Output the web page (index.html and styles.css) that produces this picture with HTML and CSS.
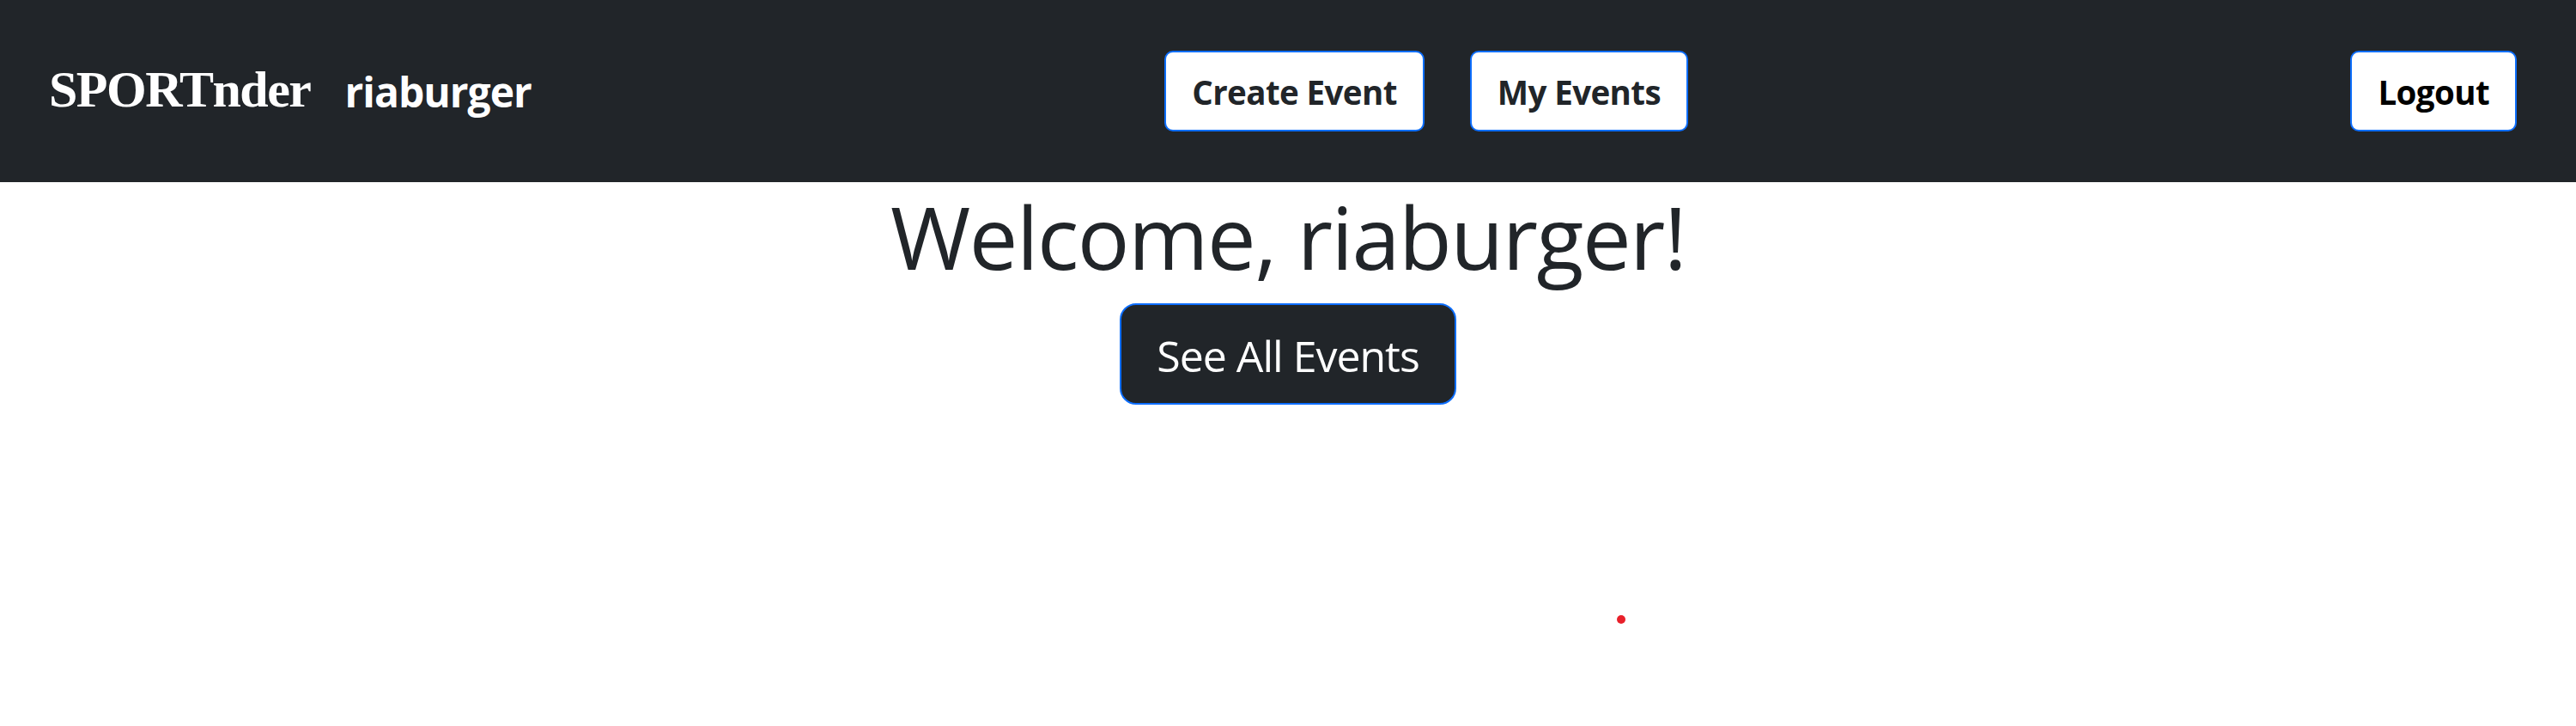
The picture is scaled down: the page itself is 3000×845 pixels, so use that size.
FILE: index.html
```html
<!DOCTYPE html>
<html lang="en">
<head>
<meta charset="utf-8">
<title>SPORTnder</title>
<link rel="stylesheet" href="styles.css">
</head>
<body>
<nav class="navbar">
  <div class="nav-left">
    <span class="brand">SPORTnder</span>
    <span class="username">riaburger</span>
  </div>
  <div class="nav-center">
    <button class="btn btn-light">Create Event</button>
    <button class="btn btn-light">My Events</button>
  </div>
  <div class="nav-right">
    <button class="btn btn-light btn-logout">Logout</button>
  </div>
</nav>
<main class="welcome">
  <h1 class="title">Welcome, riaburger!</h1>
  <button class="btn-lg">See All Events</button>
</main>
<span class="dot"></span>
</body>
</html>
```
FILE: styles.css
```css
html, body {
  margin: 0;
  padding: 0;
  background: #ffffff;
}
body {
  font-family: "Open Sans", "Noto Sans", sans-serif;
  color: #212529;
  position: relative;
  min-height: 845px;
}
.navbar {
  height: 212px;
  background: #212529;
  display: flex;
  align-items: center;
  padding: 0 69px 0 57px;
  box-sizing: border-box;
}
.nav-left {
  display: flex;
  align-items: center;
  gap: 40px;
}
.brand {
  font-family: "Liberation Serif", "Times New Roman", serif;
  font-weight: bold;
  font-size: 60px;
  color: #ffffff;
  letter-spacing: -1.5px;
  position: relative;
  top: -2px;
}
.username {
  font-weight: 700;
  font-size: 48px;
  color: #ffffff;
  letter-spacing: -1px;
}
.nav-center {
  flex: 1;
  display: flex;
  justify-content: center;
  gap: 53px;
  padding-right: 34px;
}
.nav-right {
  display: flex;
}
.btn {
  font-family: "Open Sans", "Noto Sans", sans-serif;
  font-weight: 700;
  font-size: 38.5px;
  line-height: 1.5;
  height: 94px;
  padding: 4px 30px 0 30px;
  border: 2.5px solid #0d6efd;
  border-radius: 10px;
  background: #ffffff;
  color: #212529;
  letter-spacing: -0.6px;
}
.btn-logout {
  color: #000000;
}
.welcome {
  display: flex;
  flex-direction: column;
  align-items: center;
}
.title {
  margin: 4px 0 19px 0;
  font-size: 101px;
  font-weight: 400;
  line-height: 118px;
  letter-spacing: -1.5px;
  color: #212529;
}
.btn-lg {
  font-family: "Open Sans", "Noto Sans", sans-serif;
  font-size: 50px;
  font-weight: 400;
  height: 118px;
  padding: 3px 41px 0 41px;
  border: 2.5px solid #0d6efd;
  border-radius: 19px;
  background: #212529;
  color: #ffffff;
  letter-spacing: -1px;
}
.dot {
  position: absolute;
  left: 1883px;
  top: 716px;
  width: 10px;
  height: 10px;
  border-radius: 50%;
  background: #e8202a;
}
```
